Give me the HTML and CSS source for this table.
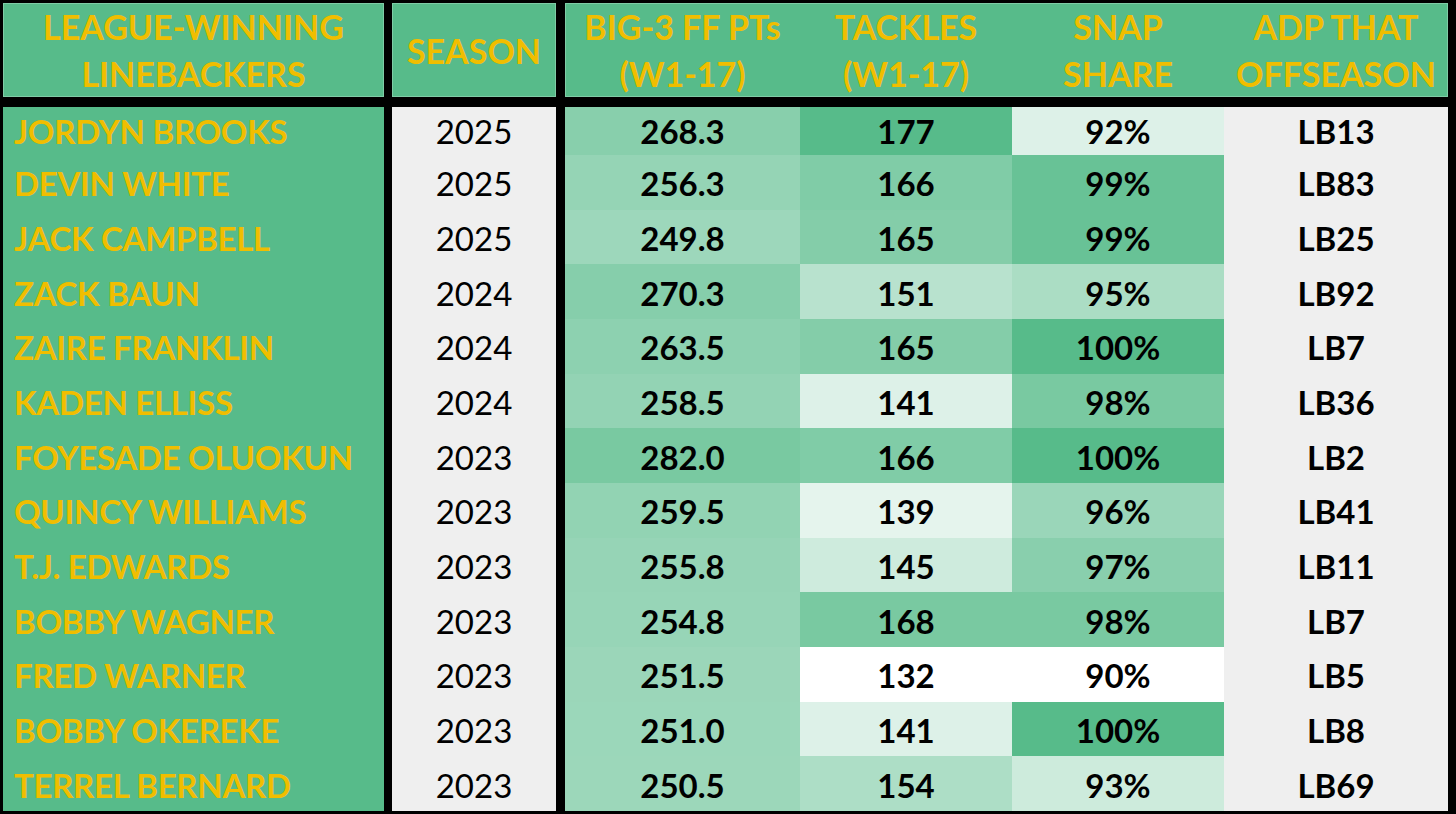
FILE: index.html
```html
<!DOCTYPE html>
<html lang="en">
<head>
<meta charset="utf-8">
<title>League-Winning Linebackers</title>
<link rel="stylesheet" href="styles.css">
</head>
<body>
<div class="table">
  <div class="col col-name">
    <div class="head"><span>LEAGUE-WINNING<br>LINEBACKERS</span></div>
    <div class="body">
      <div class="cell name r1">JORDYN BROOKS</div>
      <div class="cell name">DEVIN WHITE</div>
      <div class="cell name">JACK CAMPBELL</div>
      <div class="cell name">ZACK BAUN</div>
      <div class="cell name">ZAIRE FRANKLIN</div>
      <div class="cell name">KADEN ELLISS</div>
      <div class="cell name">FOYESADE OLUOKUN</div>
      <div class="cell name">QUINCY WILLIAMS</div>
      <div class="cell name">T.J. EDWARDS</div>
      <div class="cell name">BOBBY WAGNER</div>
      <div class="cell name">FRED WARNER</div>
      <div class="cell name">BOBBY OKEREKE</div>
      <div class="cell name">TERREL BERNARD</div>
    </div>
  </div>
  <div class="col col-season">
    <div class="head"><span>SEASON</span></div>
    <div class="body grey">
      <div class="cell num r1">2025</div>
      <div class="cell num">2025</div>
      <div class="cell num">2025</div>
      <div class="cell num">2024</div>
      <div class="cell num">2024</div>
      <div class="cell num">2024</div>
      <div class="cell num">2023</div>
      <div class="cell num">2023</div>
      <div class="cell num">2023</div>
      <div class="cell num">2023</div>
      <div class="cell num">2023</div>
      <div class="cell num">2023</div>
      <div class="cell num">2023</div>
    </div>
  </div>
  <div class="col col-stats">
    <div class="head stats-head">
      <span>BIG-3 FF PTs<br>(W1-17)</span>
      <span>TACKLES<br>(W1-17)</span>
      <span>SNAP<br>SHARE</span>
      <span>ADP THAT<br>OFFSEASON</span>
    </div>
    <div class="body stats-body">
      <div class="cell stat r1" style="background:#88CFAC">268.3</div>
      <div class="cell stat r1" style="background:#57BB8A">177</div>
      <div class="cell stat r1" style="background:#DDF1E8">92%</div>
      <div class="cell stat adp r1">LB13</div>

      <div class="cell stat" style="background:#95D4B5">256.3</div>
      <div class="cell stat" style="background:#80CCA7">166</div>
      <div class="cell stat" style="background:#68C296">99%</div>
      <div class="cell stat adp">LB83</div>

      <div class="cell stat" style="background:#9DD7BB">249.8</div>
      <div class="cell stat" style="background:#84CDA9">165</div>
      <div class="cell stat" style="background:#68C296">99%</div>
      <div class="cell stat adp">LB25</div>

      <div class="cell stat" style="background:#86CEAB">270.3</div>
      <div class="cell stat" style="background:#B8E2CE">151</div>
      <div class="cell stat" style="background:#ABDDC4">95%</div>
      <div class="cell stat adp">LB92</div>

      <div class="cell stat" style="background:#8DD1B0">263.5</div>
      <div class="cell stat" style="background:#84CDA9">165</div>
      <div class="cell stat" style="background:#57BB8A">100%</div>
      <div class="cell stat adp">LB7</div>

      <div class="cell stat" style="background:#93D3B4">258.5</div>
      <div class="cell stat" style="background:#DDF1E8">141</div>
      <div class="cell stat" style="background:#79C9A1">98%</div>
      <div class="cell stat adp">LB36</div>

      <div class="cell stat" style="background:#79C9A1">282.0</div>
      <div class="cell stat" style="background:#80CCA7">166</div>
      <div class="cell stat" style="background:#57BB8A">100%</div>
      <div class="cell stat adp">LB2</div>

      <div class="cell stat" style="background:#92D3B3">259.5</div>
      <div class="cell stat" style="background:#E5F4ED">139</div>
      <div class="cell stat" style="background:#9AD6B9">96%</div>
      <div class="cell stat adp">LB41</div>

      <div class="cell stat" style="background:#96D4B6">255.8</div>
      <div class="cell stat" style="background:#CEEBDD">145</div>
      <div class="cell stat" style="background:#89CFAD">97%</div>
      <div class="cell stat adp">LB11</div>

      <div class="cell stat" style="background:#97D5B7">254.8</div>
      <div class="cell stat" style="background:#79C9A1">168</div>
      <div class="cell stat" style="background:#79C9A1">98%</div>
      <div class="cell stat adp">LB7</div>

      <div class="cell stat" style="background:#9BD6B9">251.5</div>
      <div class="cell stat" style="background:#FFFFFF">132</div>
      <div class="cell stat" style="background:#FFFFFF">90%</div>
      <div class="cell stat adp">LB5</div>

      <div class="cell stat" style="background:#9BD7BA">251.0</div>
      <div class="cell stat" style="background:#DDF1E8">141</div>
      <div class="cell stat" style="background:#57BB8A">100%</div>
      <div class="cell stat adp">LB8</div>

      <div class="cell stat" style="background:#9CD7BA">250.5</div>
      <div class="cell stat" style="background:#ADDEC6">154</div>
      <div class="cell stat" style="background:#CDEBDC">93%</div>
      <div class="cell stat adp">LB69</div>
    </div>
  </div>
</div>
</body>
</html>
```

FILE: styles.css
```css
html, body {
  margin: 0;
  padding: 0;
  background: #000;
}

body {
  width: 1456px;
  height: 814px;
  overflow: hidden;
  font-family: Lato, "Open Sans", sans-serif;
}

.table {
  display: flex;
  padding: 3px 8px 3px 3px;
  height: 814px;
  box-sizing: border-box;
}

.col {
  display: flex;
  flex-direction: column;
  gap: 10px;
}

.col-name { width: 381px; }
.col-season { width: 164px; margin-left: 8px; }
.col-stats { width: 883px; margin-left: 9px; }

.head {
  height: 94px;
  background: #57BB8A;
  color: #F0BE00;
  font-weight: 700;
  font-size: 34px;
  line-height: 47px;
  display: flex;
  align-items: center;
  justify-content: center;
  text-align: center;
  box-shadow: inset 0 0 0 1px #7FCCA6;
}

.stats-head {
  display: grid;
  grid-template-columns: 235px 212px 212px 224px;
}

.body {
  flex: 1;
  display: grid;
  grid-template-rows: 48px repeat(12, 1fr);
}

.col-name .body { background: #57BB8A; }
.grey { background: #EFEFEF; }

.stats-body {
  grid-template-columns: 235px 212px 212px 224px;
}

.cell {
  display: flex;
  align-items: center;
  padding-top: 2px;
  box-sizing: border-box;
}

.r1 { padding-top: 0; }

.name {
  color: #F0BE00;
  font-weight: 700;
  font-size: 33px;
  padding-left: 11px;
  letter-spacing: -0.3px;
}

.num {
  justify-content: center;
  font-size: 33px;
  color: #000;
}

.stat {
  justify-content: center;
  font-size: 33px;
  font-weight: 700;
  color: #000;
}

.adp { background: #EFEFEF; }
```
